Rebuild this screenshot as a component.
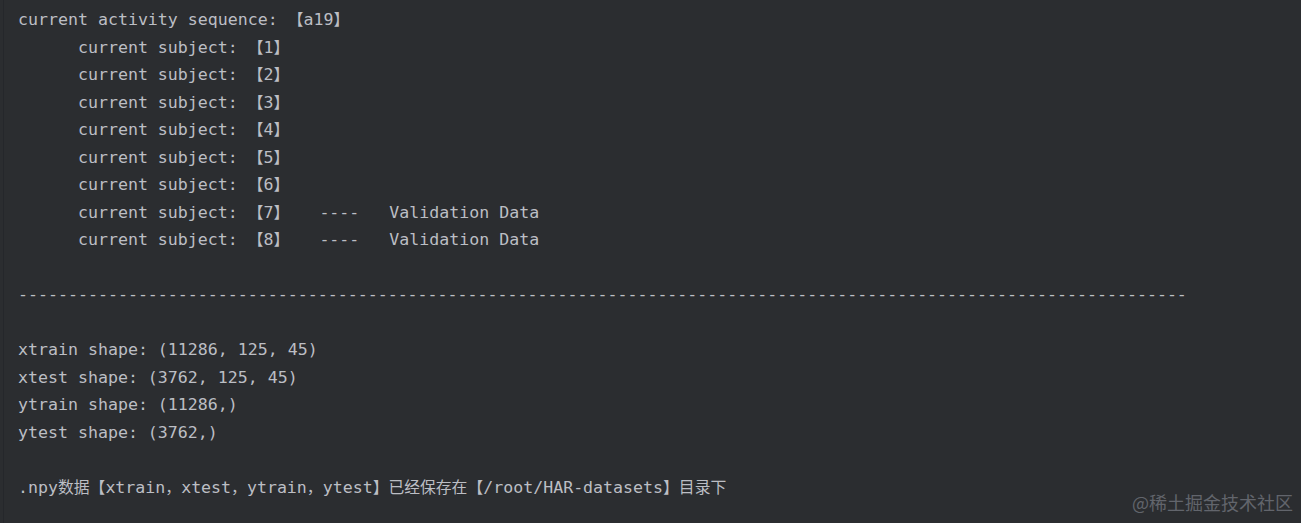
import React from "react";

const mono = {
  fontFamily: '"DejaVu Sans Mono", "Noto Sans CJK SC", monospace',
};

function Line({ text }: { text: string }) {
  const parts = text.split(/([\u3000-\u303f\u4e00-\u9fff\uff00-\uffef]+)/);
  return (
    <div className="h-[27.5px]">
      {parts.map((p, i) =>
        i % 2 === 1 ? (
          <span key={i} className="text-[15.8px]">
            {p}
          </span>
        ) : (
          <span key={i}>{p}</span>
        )
      )}
    </div>
  );
}

export default function App() {
  const lines: string[] = [
    "current activity sequence: 【a19】",
    "      current subject: 【1】",
    "      current subject: 【2】",
    "      current subject: 【3】",
    "      current subject: 【4】",
    "      current subject: 【5】",
    "      current subject: 【6】",
    "      current subject: 【7】   ----   Validation Data",
    "      current subject: 【8】   ----   Validation Data",
    "",
    "-".repeat(117),
    "",
    "xtrain shape: (11286, 125, 45)",
    "xtest shape: (3762, 125, 45)",
    "ytrain shape: (11286,)",
    "ytest shape: (3762,)",
    "",
    ".npy数据【xtrain，xtest，ytrain，ytest】已经保存在【/root/HAR-datasets】目录下",
  ];
  return (
    <div className="relative w-[1301px] h-[523px] overflow-hidden bg-[#2b2d30]">
      <div className="absolute left-[3px] top-0 h-full w-px bg-[#25272b]" />
      <div
        className="pl-[18px] pt-[6px] text-[16.6px] leading-[27.5px] text-[#bcbec4] whitespace-pre"
        style={mono}
      >
        {lines.map((l, i) => (
          <Line key={i} text={l} />
        ))}
      </div>
      <div
        className="absolute right-[8px] bottom-[7px] text-[18px] text-[#62656c]"
        style={{ fontFamily: '"Noto Sans CJK SC", sans-serif' }}
      >
        @稀土掘金技术社区
      </div>
    </div>
  );
}
